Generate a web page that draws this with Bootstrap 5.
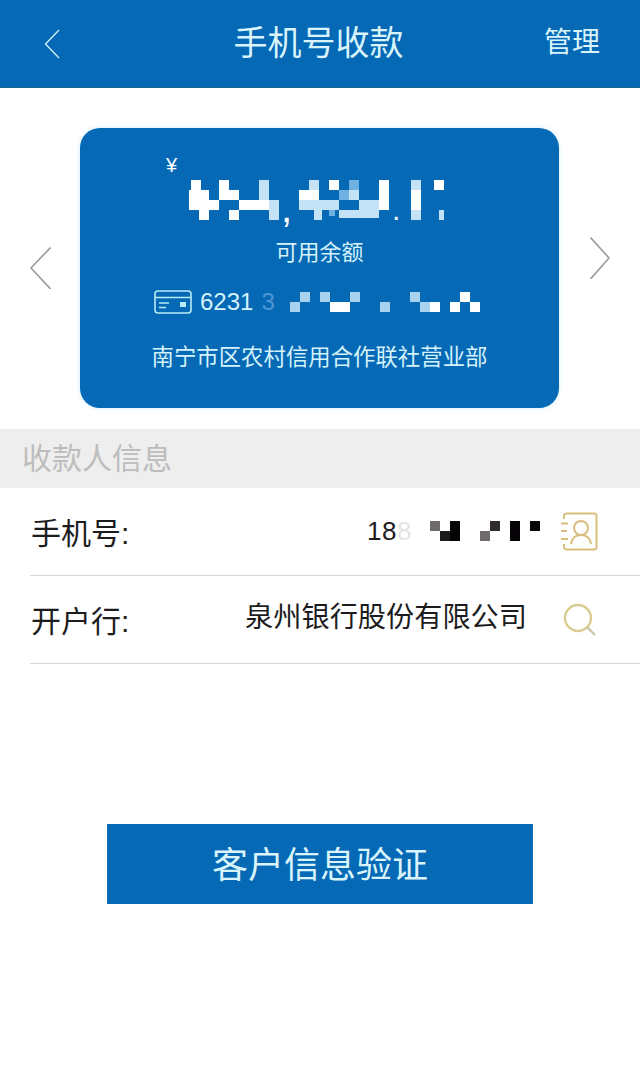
<!DOCTYPE html>
<html lang="zh-CN">
<head>
<meta charset="utf-8">
<title>手机号收款</title>
<link href="https://cdn.jsdelivr.net/npm/bootstrap@5.3.0/dist/css/bootstrap.min.css" rel="stylesheet">
<style>
html, body { background: #fff; }
body { width: 640px; height: 1090px; overflow: hidden; font-family: "Liberation Sans", "Noto Sans CJK SC", sans-serif; color: #1c1c1e; }
.top-bar { height: 88px; padding: 0 40px 0 44px; background: #0569b5; border-bottom: 1px solid #1b618f; color: #d9f4fb; }
.top-side { flex: 1 1 0; }
.top-title { font-size: 34px; line-height: 1; padding-bottom: 2px; margin-right: 7px; }
.top-action { font-size: 28px; line-height: 1; padding-bottom: 2px; }
.carousel-row { padding: 40px 30px 0; height: 341px; column-gap: 29px; }
.arrow-left { width: 21px; height: 42px; margin-top: 119px; flex: none; }
.arrow-right { width: 20px; height: 42px; margin-top: 109px; margin-left: 2px; flex: none; }
.acct-card { width: 479px; height: 280px; flex: none; background: #0569b5; border-radius: 20px; box-shadow: 0 0 4px #c9ecfa; color: #d4f2fb; }
.yen { font-size: 20px; line-height: 20px; padding: 27px 0 0 86px; color: #fff; }
.amount-mosaic { display: block; width: 260px; height: 60px; margin: 5px 0 0 109px; }
.avail { font-size: 22px; line-height: 28px; margin-top: -1px; text-align: center; }
.card-no { height: 30px; margin: 20px 0 0 74px; font-size: 24px; line-height: 30px; column-gap: 8px; }
.card-glyph { width: 38px; height: 24px; flex: none; }
.card-mosaic { width: 230px; height: 30px; margin-left: -25px; flex: none; }
.card-fade { color: #4f97d2; }
.bank { font-size: 22.400px; line-height: 30px; margin-top: 26px; text-align: center; }
.sec-head { height: 59px; padding-left: 22px; background: #eeeeee; color: #bdbdbd; font-size: 30px; }
.form-rows { padding-left: 30px; }
.form-line { height: 88px; border-bottom: 1px solid #d8d6d6; padding-right: 42px; }
.form-label-txt { font-size: 30px; line-height: 1; padding-top: 4px; padding-left: 1px; }
.phone-txt { font-size: 26px; letter-spacing: .5px; }
.phone-fade { color: #e4e4e4; }
.phone-mosaic { width: 120px; height: 20px; margin-left: 18px; margin-right: 10px; margin-bottom: 2px; flex: none; }
.contact-ico { width: 38px; height: 39px; flex: none; }
.bank-txt { font-size: 28.200px; line-height: 1; margin-right: 36px; padding-bottom: 4px; }
.search-ico { width: 34px; height: 34px; flex: none; margin-right: 1px; }
.verify-wrap { padding-top: 160px; }
.verify-btn { width: 426px; height: 80px; --bs-btn-bg: #0569b5; --bs-btn-hover-bg: #0569b5; --bs-btn-active-bg: #0569b5; --bs-btn-border-color: #0569b5; --bs-btn-hover-border-color: #0569b5; --bs-btn-color: #d9f4fb; --bs-btn-hover-color: #d9f4fb; --bs-btn-border-radius: 0; font-size: 36px; line-height: 1; padding: 4px 0 0; }
</style>
</head>
<body>
<nav class="top-bar d-flex align-items-center">
  <div class="top-side d-flex">
    <svg width="16" height="30" viewBox="0 0 16 30" fill="none" stroke="#d9f4fb" stroke-width="1.300" aria-hidden="true"><path d="M15 1 1.500 15 15 29"/></svg>
  </div>
  <div class="top-title">手机号收款</div>
  <div class="top-side text-end"><span class="top-action">管理</span></div>
</nav>

<section class="carousel-row d-flex align-items-start">
  <svg class="arrow-left" viewBox="0 0 21 42" fill="none" stroke="#9a9a9a" stroke-width="1.600" aria-hidden="true"><path d="M20.500 .5 1 21l19.500 21"/></svg>
  <div class="acct-card">
    <div class="yen">¥</div>
    <svg class="amount-mosaic" viewBox="0 0 260 60" aria-hidden="true">
      <g fill="#ffffff">
        <rect x="2" y="0" width="10" height="10"/><rect x="30" y="0" width="10" height="10"/><rect x="140" y="0" width="10" height="10"/><rect x="190" y="0" width="10" height="10"/><rect x="245" y="0" width="10" height="10"/>
        <rect x="0" y="10" width="20" height="10"/><rect x="30" y="10" width="20" height="10"/><rect x="110" y="10" width="20" height="10"/><rect x="190" y="10" width="10" height="10"/><rect x="222" y="10" width="10" height="10"/>
        <rect x="0" y="20" width="30" height="10"/><rect x="50" y="20" width="30" height="10"/><rect x="190" y="20" width="10" height="10"/><rect x="222" y="20" width="10" height="10"/>
        <rect x="10" y="30" width="10" height="10"/><rect x="40" y="30" width="10" height="10"/>
      </g>
      <g fill="#c4e2f6">
        <rect x="70" y="0" width="10" height="20"/><rect x="120" y="0" width="10" height="10"/><rect x="222" y="0" width="10" height="10"/><rect x="160" y="10" width="10" height="10"/><rect x="170" y="20" width="20" height="10"/><rect x="110" y="20" width="40" height="10"/>
        <rect x="80" y="20" width="10" height="20"/><rect x="222" y="30" width="10" height="10"/><rect x="250" y="30" width="5" height="10"/><rect x="125" y="30" width="8" height="10"/><rect x="150" y="30" width="40" height="8"/>
      </g>
      <g fill="#6fb0e2">
        <rect x="160" y="0" width="10" height="10"/><rect x="150" y="10" width="10" height="10"/><rect x="140" y="30" width="6" height="6"/>
      </g>
      <text x="92" y="42" font-size="40" fill="#fff" font-family="Liberation Sans, sans-serif">,</text>
      <text x="203" y="40" font-size="30" fill="#e6f4fc" font-family="Liberation Sans, sans-serif">.</text>
    </svg>
    <div class="avail">可用余额</div>
    <div class="card-no d-flex align-items-center">
      <svg class="card-glyph" viewBox="0 0 38 24" fill="none" stroke="#b8ecf8" stroke-width="1.600" aria-hidden="true"><rect x="1" y="1" width="36" height="22" rx="3"/><path d="M1 7.500h36M5 13h10M5 17.500h7"/><rect x="26" y="12" width="6" height="5" fill="#b8ecf8" stroke="none"/></svg>
      <span>6231</span>
      <span class="card-fade">3</span>
      <svg class="card-mosaic" viewBox="0 0 230 30" aria-hidden="true">
        <g fill="#fff"><rect x="172" y="15" width="10" height="10"/><rect x="192" y="15" width="10" height="10"/><rect x="202" y="5" width="10" height="10"/><rect x="212" y="15" width="10" height="10"/><rect x="72" y="15" width="20" height="10"/></g>
        <g fill="#a9d2f0"><rect x="32" y="15" width="10" height="10"/><rect x="42" y="5" width="10" height="10"/><rect x="62" y="5" width="10" height="10"/><rect x="92" y="5" width="10" height="10"/><rect x="122" y="15" width="10" height="10"/><rect x="152" y="5" width="10" height="10"/><rect x="162" y="15" width="10" height="10"/></g>
      </svg>
    </div>
    <div class="bank">南宁市区农村信用合作联社营业部</div>
  </div>
  <svg class="arrow-right" viewBox="0 0 20 42" fill="none" stroke="#9a9a9a" stroke-width="1.600" aria-hidden="true"><path d="M.5.5 19 21 .5 42"/></svg>
</section>

<div class="sec-head d-flex align-items-center">收款人信息</div>

<div class="form-rows">
  <div class="form-line d-flex align-items-center justify-content-between">
    <div class="form-label-txt">手机号:</div>
    <div class="d-flex align-items-center">
      <span class="phone-txt">18<span class="phone-fade">8</span></span>
      <svg class="phone-mosaic" viewBox="0 0 120 20" aria-hidden="true">
        <rect x="0" y="0" width="10" height="10" fill="#6e6a6e"/><rect x="10" y="10" width="10" height="10" fill="#1d1a1d"/><rect x="20" y="0" width="10" height="20" fill="#050305"/>
        <rect x="60" y="0" width="10" height="10" fill="#2f2b2f"/><rect x="50" y="10" width="10" height="10" fill="#6e6a6e"/><rect x="80" y="0" width="10" height="20" fill="#050305"/><rect x="100" y="0" width="10" height="10" fill="#050305"/>
      </svg>
      <svg class="contact-ico" viewBox="0 0 38 39" fill="none" stroke="#d8bf7e" stroke-width="2" aria-hidden="true"><path d="M4 7V4q0-2.500 3-2.500h27q2.500 0 2.500 2.500v31q0 2.500-2.500 2.500H7q-3 0-3-2.500v-3"/><path d="M1 11.500h7M1 19h6M1 27h7"/><circle cx="21" cy="16" r="7"/><path d="M11 32c1-6 5-9 10-9s9 3 10 9"/></svg>
    </div>
  </div>
  <div class="form-line d-flex align-items-center justify-content-between">
    <div class="form-label-txt">开户行:</div>
    <div class="d-flex align-items-center">
      <span class="bank-txt">泉州银行股份有限公司</span>
      <svg class="search-ico" viewBox="0 0 34 34" fill="none" stroke="#d8cd8f" stroke-width="2.400" aria-hidden="true"><circle cx="15" cy="15" r="13"/><path d="m24 24 8 8" stroke="#c9c6a4"/></svg>
    </div>
  </div>
</div>

<div class="verify-wrap d-flex justify-content-center">
  <button type="button" class="btn verify-btn">客户信息验证</button>
</div>
<script src="https://cdn.jsdelivr.net/npm/bootstrap@5.3.0/dist/js/bootstrap.bundle.min.js"></script>
</body>
</html>
